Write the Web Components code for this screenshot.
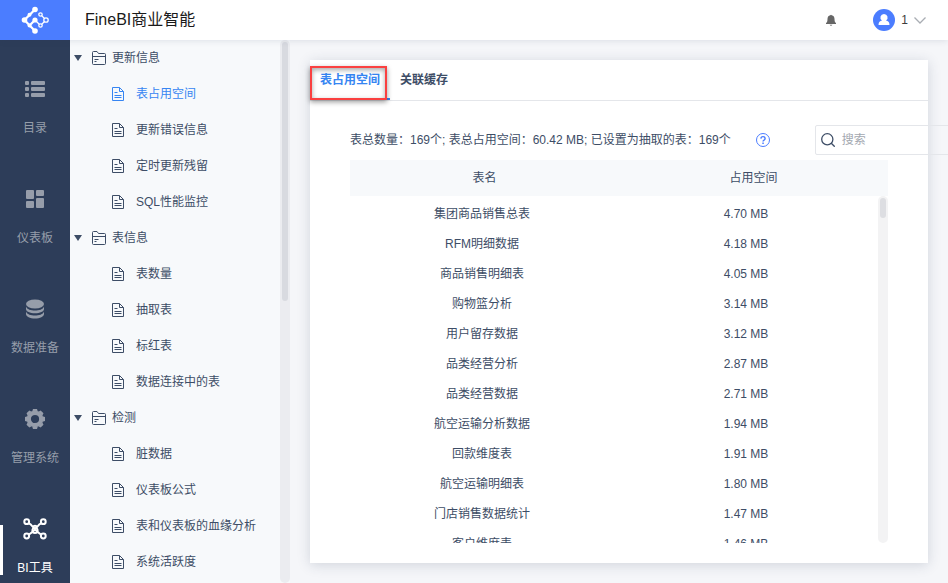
<!DOCTYPE html>
<html lang="zh-CN">
<head>
<meta charset="utf-8">
<meta name="viewport" content="width=device-width, initial-scale=1">
<title>FineBI商业智能</title>
<style>
  html, body { margin: 0; height: 100%; }
  body {
    --ink: #3d4d66;
    --accent: #3685f2;
    --brand: #4b7dff;
    --rail: #2d3d59;
    --panel: #f7f9fb;
    --line: #e4e6ea;
    font: 12px/18px "Liberation Sans", "Noto Sans CJK SC", sans-serif;
    color: var(--ink);
    overflow: hidden;
  }
</style>
</head>
<body>
<bi-app></bi-app>
<script>
const define = (name, html, extra) => {
  const tpl = document.createElement('template');
  tpl.innerHTML = html;
  customElements.define(name, class extends HTMLElement {
    constructor() {
      super();
      this.attachShadow({ mode: 'open' }).append(tpl.content.cloneNode(true));
    }
    connectedCallback() { if (extra) extra(this, this.shadowRoot); }
  });
};

const TEETH = 'M7.200 2.500 8 0h4l.8 2.500zM7.200 17.500 8 20h4l.8-2.500z';
const ICONS = {
  logo: [28, 28, `<g fill="none" stroke="#fff" stroke-width="2.200"><path d="M14 3.500 3.500 14 14 25M8.500 19.500 14 14"/><path d="M14 14l5.500 5.500L25 14l-5.500-5.500" stroke-width="1.300"/></g>
    <g fill="#fff"><circle cx="14" cy="3.500" r="2.800"/><circle cx="3.500" cy="14" r="2.800"/><circle cx="14" cy="25" r="2.800"/><circle cx="14" cy="14" r="2.600"/><circle cx="8.500" cy="8.700" r="2"/><circle cx="8.500" cy="19.500" r="2"/></g>
    <g fill="#4b7dff" stroke="#fff" stroke-width="1.300"><circle cx="19.500" cy="8.500" r="1.700"/><circle cx="25" cy="14" r="2.200"/><circle cx="19.500" cy="19.500" r="1.700"/></g>`],
  list: [20, 20, `<g fill="currentColor"><rect y="2" width="4" height="4" rx="1"/><rect x="6" y="2" width="14" height="4" rx="1"/><rect y="8" width="4" height="4" rx="1"/><rect x="6" y="8" width="14" height="4" rx="1"/><rect y="14" width="4" height="4" rx="1"/><rect x="6" y="14" width="14" height="4" rx="1"/></g>`],
  board: [20, 20, `<g fill="currentColor"><rect x="1" y="1" width="8" height="9" rx="1"/><rect x="11" y="1" width="8" height="6" rx="1"/><rect x="1" y="12" width="8" height="7" rx="1"/><rect x="11" y="9" width="8" height="10" rx="1"/></g>`],
  data: [20, 20, `<g fill="currentColor"><ellipse cx="10" cy="5" rx="9" ry="4.500"/><path d="M1 7.500c1 3 5 4 9 4s8-1 9-4v2.500c0 2.500-4 4.300-9 4.300S1 12.500 1 10z"/><path d="M1 12.500c1 3 5 4 9 4s8-1 9-4v2.500c0 2.500-4 4.500-9 4.500S1 17.500 1 15z"/></g>`],
  gear: [20, 20, `<circle cx="10" cy="10" r="6.200" fill="none" stroke="currentColor" stroke-width="4.200"/><g fill="currentColor">${[0, 45, 90, 135].map(a => `<path d="${TEETH}" transform="rotate(${a} 10 10)"/>`).join('')}</g>`],
  tools: [24, 22, `<g fill="none" stroke="currentColor" stroke-width="2"><circle cx="3.700" cy="3.700" r="2.400"/><circle cx="20.300" cy="3.700" r="2.400"/><circle cx="3.700" cy="18" r="2.400"/><circle cx="20.300" cy="18" r="2.400"/><path d="M5.600 5.200Q8 6.500 9.500 8.500T14 13.500L18.300 16.800M18.400 5.200Q16 6.500 14.500 8.500T10 13.500L5.700 16.800"/><circle cx="12" cy="12.500" r="2.600"/><path d="M9.800 9a2.500 2.500 0 0 1 4.400 0"/></g>`],
  folder: [14, 14, `<g fill="none" stroke="currentColor"><path d="M.5 12.500v-11q0-1 1-1h3.500l1.500 2h6q1 0 1 1v9q0 1-1 1h-11q-1 0-1-1z"/><path d="M.5 5.500h13M2.500 8.500h4M2.500 10.500h2"/></g>`],
  doc: [12, 14, `<g fill="none" stroke="currentColor"><path d="M.5.5h7l4 4v9H.5zM7.500.5v4h4M2.500 5.500h3M2.500 8.500h7M2.500 10.500h7"/></g>`],
  bell: [12, 12, `<path fill="#666" d="M5.300 1.200a.8.800 0 0 1 1.400 0C8.700 1.700 9.500 3 9.500 5c0 2.500.5 3.500 1.500 4v1H1V9c1-.5 1.500-1.500 1.500-4 0-2 .8-3.300 2.800-3.800zM4.600 10.800h2.800q-1.400 1.800-2.800 0z"/>`],
  user: [22, 22, `<circle cx="11" cy="11" r="11" fill="#4b7dff"/><path fill="#fff" d="M11 5a3.600 3.600 0 0 1 2 6.600c2 .5 3.500 1.400 3.500 4.400h-11c0-3 1.500-3.900 3.500-4.400A3.600 3.600 0 0 1 11 5z"/>`],
  chevron: [12, 12, `<path d="M.5 3.500 6 9l5.500-5.500" fill="none" stroke="#a9adb3" stroke-width="1.300"/>`],
  help: [16, 16, `<circle cx="8" cy="8" r="6.500" fill="none" stroke="#4b7dff"/><path d="M5.900 6.600q.1-2 2.100-2t2.100 1.800q0 1-1.100 1.700-1 .6-1 1.400" fill="none" stroke="#4b7dff" stroke-width="1.400"/><rect x="7.300" y="10.500" width="1.500" height="1.500" fill="#4b7dff"/>`],
  search: [14, 14, `<g fill="none" stroke="#3d4d66" stroke-width="1.300"><circle cx="6.300" cy="6.300" r="5.600"/><path d="M10.300 10.300 13.700 13.700"/></g>`]
};

define('bi-icon', `<style>:host{display:block;flex:none}svg{display:block}</style><span></span>`, (el, root) => {
  const [w, h, body] = ICONS[el.getAttribute('name')];
  root.querySelector('span').innerHTML = `<svg width="${w}" height="${h}" viewBox="0 0 ${w} ${h}" aria-hidden="true">${body}</svg>`;
});

define('bi-header', `
<style>
  :host { display: flex; align-items: center; height: 40px; background: #fff; color: #1a1a1a; box-shadow: 0 1px 6px rgba(45,61,89,.12); position: relative; z-index: 1; }
  .logo { display: flex; align-items: center; justify-content: center; width: 70px; height: 40px; background: var(--brand); }
  h1 { flex: 1; margin: 0; padding-left: 15px; font-size: 16px; line-height: 24px; font-weight: 400; }
  button { display: flex; align-items: center; border: 0; padding: 0; background: none; font: inherit; color: #3d3d3d; }
  .user { gap: 6px; margin: 0 22px 0 36px; }
</style>
<a class="logo" href="#" aria-label="首页"><bi-icon name="logo"></bi-icon></a>
<h1><slot></slot></h1>
<button aria-label="消息"><bi-icon name="bell"></bi-icon></button>
<button class="user"><bi-icon name="user"></bi-icon><slot name="user"></slot><bi-icon name="chevron"></bi-icon></button>`);

define('bi-nav-item', `
<style>
  :host { display: block; flex: none; position: relative; color: #969daa; }
  a { display: flex; flex-direction: column; align-items: center; gap: 20px; height: 72px; padding-top: 38px; color: inherit; text-decoration: none; }
  .icon { display: flex; align-items: center; height: 21px; }
  :host([active]) { color: #fff; }
  :host([active])::before { content: ""; position: absolute; left: 0; top: 45px; width: 3px; height: 50px; background: #fff; }
</style>
<a href="#"><span class="icon"></span><slot></slot></a>`, (el, root) => {
  root.querySelector('.icon').innerHTML = `<bi-icon name="${el.getAttribute('icon')}"></bi-icon>`;
});

define('bi-nav', `
<style>:host { display: block; background: var(--rail); overflow: hidden; } nav { display: flex; flex-direction: column; }</style>
<nav><slot></slot></nav>`);

define('bi-leaf', `
<style>
  :host { display: block; }
  a { display: flex; align-items: center; gap: 12px; height: 36px; padding-left: 42px; color: inherit; text-decoration: none; white-space: nowrap; }
  :host([active]) { color: var(--accent); }
</style>
<a href="#"><bi-icon name="doc"></bi-icon><slot></slot></a>`);

define('bi-group', `
<style>
  :host { display: block; }
  button { display: flex; align-items: center; width: 100%; height: 36px; padding: 0 0 0 4px; border: 0; background: none; font: inherit; color: inherit; }
  .caret { border: 4px solid transparent; border-top: 6px solid #3d4d66; border-bottom: 0; margin-right: 10px; }
  bi-icon { margin-right: 6px; }
</style>
<button aria-expanded="true"><span class="caret"></span><bi-icon name="folder"></bi-icon><span class="t"></span></button>
<slot></slot>`, (el, root) => { root.querySelector('.t').textContent = el.getAttribute('label'); });

define('bi-tree', `
<style>
  :host { display: grid; grid-template-columns: 1fr 10px; background: var(--panel); overflow: hidden; }
  nav { overflow: hidden; min-height: 0; }
  .track { background: #ebecf0; border-radius: 5px; padding: 2px; }
  .thumb { height: 48%; background: #d8dae0; border-radius: 3px; }
</style>
<nav aria-label="工具"><slot></slot></nav>
<div class="track"><div class="thumb"></div></div>`);

define('bi-tabs', `
<style>
  :host { display: flex; border-bottom: 1px solid var(--line); position: relative; }
  button { box-sizing: border-box; height: 40px; padding: 2px 10px 0; border: 0; border-bottom: 2px solid transparent; background: none; font: inherit; font-weight: 700; color: inherit; }
  button[aria-selected=true] { color: var(--accent); border-color: var(--accent); }
  .mark { position: absolute; left: 0; top: 6px; box-sizing: border-box; width: 77px; height: 34px; border: 2px solid #fa4040; box-shadow: 0 2px 5px rgba(0,0,0,.4), inset 0 2px 5px rgba(0,0,0,.35); pointer-events: none; }
</style>
<button role="tab" aria-selected="true">表占用空间</button><button role="tab" aria-selected="false">关联缓存</button>
<span class="mark"></span>`);

define('bi-search', `
<style>
  :host { display: flex; align-items: center; flex: none; box-sizing: border-box; width: 200px; height: 30px; padding-left: 5px; gap: 7px; border: 1px solid var(--line); border-radius: 2px; }
  input { flex: 1; min-width: 0; border: 0; outline: 0; padding: 0; background: none; font: inherit; color: inherit; }
  input::placeholder { color: #a3a8b0; opacity: 1; }
</style>
<bi-icon name="search"></bi-icon><input type="text" placeholder="搜索" aria-label="搜索">`);

define('bi-table', `
<style>
  :host { display: block; position: relative; min-height: 0; }
  table { display: flex; flex-direction: column; height: 100%; }
  thead { display: block; flex: none; background: var(--panel); }
  tbody { display: block; flex: 1; min-height: 0; overflow: hidden; padding: 3px 10px 0 0; }
  tr { display: grid; grid-template-columns: 1fr 1fr; align-items: center; height: 30px; text-align: center; }
  thead tr { height: 36px; }
  th, td { padding: 0; font-weight: 400; }
  .track { position: absolute; right: 0; top: 36px; bottom: 0; width: 10px; box-sizing: border-box; padding: 2px; border-radius: 5px; background: #f3f3f4; }
  .thumb { height: 20px; border-radius: 3px; background: #dddee2; }
</style>
<table><thead><tr><th scope="col">表名</th><th scope="col">占用空间</th></tr></thead><tbody></tbody></table>
<div class="track"><div class="thumb"></div></div>`, (el, root) => {
  const rows = [['集团商品销售总表', '4.70'], ['RFM明细数据', '4.18'], ['商品销售明细表', '4.05'], ['购物篮分析', '3.14'],
    ['用户留存数据', '3.12'], ['品类经营分析', '2.87'], ['品类经营数据', '2.71'], ['航空运输分析数据', '1.94'],
    ['回款维度表', '1.91'], ['航空运输明细表', '1.80'], ['门店销售数据统计', '1.47'], ['客户维度表', '1.46']];
  root.querySelector('tbody').innerHTML = rows.map(([n, s]) => `<tr><td>${n}</td><td>${s} MB</td></tr>`).join('');
});

define('bi-card', `
<style>
  :host { display: flex; flex-direction: column; background: #fff; box-shadow: 0 2px 12px rgba(45,61,89,.18); min-height: 0; min-width: 0; }
  .body { flex: 1; min-height: 0; display: flex; flex-direction: column; padding: 24px 40px 20px; }
  .bar { display: flex; align-items: center; height: 30px; margin-bottom: 5px; white-space: nowrap; }
  button { border: 0; padding: 0; background: none; margin: 0 44px 0 24px; }
  bi-table { flex: 1; }
</style>
<bi-tabs role="tablist"></bi-tabs>
<div class="body">
  <div class="bar"><span>表总数量：169个; 表总占用空间：60.42 MB; 已设置为抽取的表：169个</span><button aria-label="帮助"><bi-icon name="help"></bi-icon></button><bi-search></bi-search></div>
  <bi-table></bi-table>
</div>`);

define('bi-app', `
<style>
  :host { display: grid; grid-template: 40px minmax(0, 1fr) / 70px 220px minmax(0, 1fr); height: 100vh; background: #f5f6f9; }
  bi-header { grid-column: 1 / -1; }
  main { display: grid; padding: 20px; min-height: 0; overflow: hidden; }
</style>
<bi-header>FineBI商业智能<span slot="user">1</span></bi-header>
<bi-nav>
  <bi-nav-item icon="list">目录</bi-nav-item>
  <bi-nav-item icon="board">仪表板</bi-nav-item>
  <bi-nav-item icon="data">数据准备</bi-nav-item>
  <bi-nav-item icon="gear">管理系统</bi-nav-item>
  <bi-nav-item icon="tools" active>BI工具</bi-nav-item>
</bi-nav>
<bi-tree>
  <bi-group label="更新信息">
    <bi-leaf active>表占用空间</bi-leaf><bi-leaf>更新错误信息</bi-leaf><bi-leaf>定时更新残留</bi-leaf><bi-leaf>SQL性能监控</bi-leaf>
  </bi-group>
  <bi-group label="表信息">
    <bi-leaf>表数量</bi-leaf><bi-leaf>抽取表</bi-leaf><bi-leaf>标红表</bi-leaf><bi-leaf>数据连接中的表</bi-leaf>
  </bi-group>
  <bi-group label="检测">
    <bi-leaf>脏数据</bi-leaf><bi-leaf>仪表板公式</bi-leaf><bi-leaf>表和仪表板的血缘分析</bi-leaf><bi-leaf>系统活跃度</bi-leaf>
  </bi-group>
</bi-tree>
<main><bi-card></bi-card></main>`);
</script>
</body>
</html>
